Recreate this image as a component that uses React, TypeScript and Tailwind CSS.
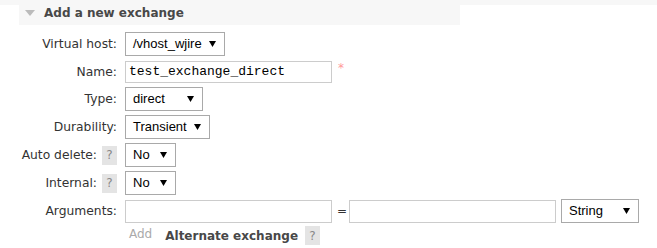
import React from "react";

const Caret = () => (
  <svg width="7" height="6" viewBox="0 0 7 6" className="shrink-0">
    <path d="M0 0 L7 0 L3.5 6 Z" fill="#000" />
  </svg>
);

const Select = ({ value, width }: { value: string; width: number }) => (
  <div
    className="flex h-[24px] shrink-0 items-center justify-between border border-[#a9a9a9] bg-white pl-[7px] pr-[8px] text-[13px] text-black"
    style={{ width, fontFamily: '"Liberation Sans", Arial, sans-serif' }}
  >
    <span>{value}</span>
    <Caret />
  </div>
);

const Help = () => (
  <span className="inline-flex h-[19px] w-[15px] items-center justify-center bg-[#e4e4e4] text-[12px] text-[#888]">?</span>
);

const Label = ({ children }: { children: React.ReactNode }) => (
  <div className="flex w-[118px] shrink-0 items-center justify-end gap-[5px] pr-[1px] text-right">{children}</div>
);

export default function App() {
  return (
    <div
      className="relative h-[248px] w-[657px] overflow-hidden bg-white text-[12.3px] text-[#333]"
      style={{ fontFamily: '"DejaVu Sans", Verdana, sans-serif' }}
    >
      <div className="h-[5px] w-full bg-[#f7f7f7]" />
      <div className="ml-[19px] flex h-[20px] w-[441px] items-start bg-[#f7f7f7]">
        <svg width="10" height="6" viewBox="0 0 10 6" className="ml-[6px] mt-[5px]">
          <path d="M0 0 L10 0 L5 6 Z" fill="#bbb" />
        </svg>
        <span className="ml-[9px] text-[12px] font-bold leading-[16px] text-[#484848]">Add a new exchange</span>
      </div>

      <div className="mt-[7px] flex flex-col">
        <div className="flex h-[24px] items-center gap-[7px]">
          <Label>Virtual host:</Label>
          <Select value="/vhost_wjire" width={100} />
        </div>
        <div className="mt-[5px] flex h-[22px] items-center gap-[7px]">
          <Label>Name:</Label>
          <div
            className="flex h-[22px] w-[207px] shrink-0 items-center border border-[#ccc] px-[3px] text-[13px] text-black"
            style={{ fontFamily: '"Liberation Mono", "Courier New", monospace' }}
          >
            test_exchange_direct
          </div>
          <span className="-mt-[8px] ml-[-1px] text-[12px] text-[#f99]">*</span>
        </div>
        <div className="mt-[4px] flex h-[24px] items-center gap-[7px]">
          <Label>Type:</Label>
          <Select value="direct" width={78} />
        </div>
        <div className="mt-[4px] flex h-[24px] items-center gap-[7px]">
          <Label>Durability:</Label>
          <Select value="Transient" width={85} />
        </div>
        <div className="mt-[4px] flex h-[24px] items-center gap-[7px]">
          <Label>
            <span>Auto delete:</span>
            <Help />
          </Label>
          <Select value="No" width={51} />
        </div>
        <div className="mt-[4px] flex h-[24px] items-center gap-[7px]">
          <Label>
            <span>Internal:</span>
            <Help />
          </Label>
          <Select value="No" width={51} />
        </div>
        <div className="mt-[4px] flex h-[24px] items-center">
          <div className="mr-[7px]">
            <Label>Arguments:</Label>
          </div>
          <div className="h-[23px] w-[207px] shrink-0 border border-[#ccc]" />
          <span className="ml-[5px] w-[12px] text-[12px] text-[#333]">=</span>
          <div className="h-[23px] w-[207px] shrink-0 border border-[#ccc]" />
          <div className="ml-[5px]">
            <Select value="String" width={78} />
          </div>
        </div>
        <div className="mt-[3px] flex h-[20px] items-start">
          <span className="ml-[129px] mt-[1px] text-[12px] leading-[14px] text-[#aaa]">Add</span>
          <span className="ml-[13px] mt-[3px] text-[12px] font-bold leading-[14px] text-[#484848]">Alternate exchange</span>
          <span className="ml-[7px]">
            <Help />
          </span>
        </div>
      </div>
    </div>
  );
}
